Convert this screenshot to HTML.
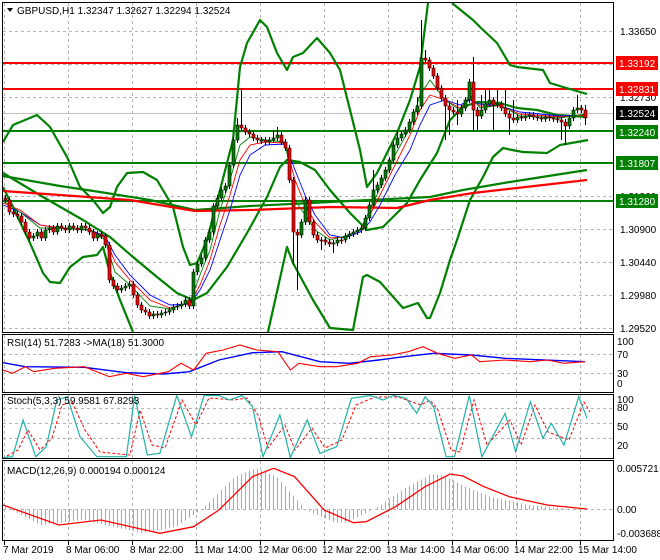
<!DOCTYPE html>
<html><head><meta charset="utf-8"><style>
html,body{margin:0;padding:0;background:#fff;width:660px;height:560px;overflow:hidden}
svg{display:block;font-family:"Liberation Sans",Tahoma,sans-serif;font-size:10px}
</style></head><body>
<svg width="660" height="560" viewBox="0 0 660 560" xmlns="http://www.w3.org/2000/svg">
<defs>
<pattern id="hp" x="0" y="0" width="4" height="10" patternUnits="userSpaceOnUse"><rect x="1" y="0" width="1" height="10" fill="#a8a8a8"/></pattern>
</defs>
<rect width="660" height="560" fill="#fff"/>
<!-- grid -->
<path fill="none" stroke="#b4b4b4" stroke-dasharray="3,3" d="M4.5,3V332M68.5,3V332M132.5,3V332M196.5,3V332M260.5,3V332M324.5,3V332M388.5,3V332M452.5,3V332M516.5,3V332M580.5,3V332
M4.5,335V392M68.5,335V392M132.5,335V392M196.5,335V392M260.5,335V392M324.5,335V392M388.5,335V392M452.5,335V392M516.5,335V392M580.5,335V392
M4.5,395V458M68.5,395V458M132.5,395V458M196.5,395V458M260.5,395V458M324.5,395V458M388.5,395V458M452.5,395V458M516.5,395V458M580.5,395V458
M4.5,461V540M68.5,461V540M132.5,461V540M196.5,461V540M260.5,461V540M324.5,461V540M388.5,461V540M452.5,461V540M516.5,461V540M580.5,461V540
M3,31.5H613M3,64.5H613M3,97.5H613M3,130.5H613M3,163.5H613M3,196.5H613M3,229.5H613M3,262.5H613M3,295.5H613M3,328.5H613
M3,354.5H613M3,373.5H613M3,408.5H613M3,423.5H613M3,438.5H613M3,509.5H613"/>
<!-- levels -->
<line x1="3" y1="113.5" x2="613" y2="113.5" stroke="#c0c0c0"/>
<g stroke-width="2">
<line x1="3" y1="63" x2="613" y2="63" stroke="#f00"/>
<line x1="3" y1="89" x2="613" y2="89" stroke="#f00"/>
<line x1="3" y1="131" x2="613" y2="131" stroke="#008000"/>
<line x1="3" y1="163" x2="613" y2="163" stroke="#008000"/>
<line x1="3" y1="201" x2="613" y2="201" stroke="#008000"/>
</g>
<!-- bands -->
<g fill="none" stroke-width="2.2" stroke-linejoin="round">
<polyline stroke="#008000" points="3,142 13,125 37,115 50,127 67,157 80,187 93,200 103,213 110,207 117,187 127,173 143,172 157,180 173,207 183,247 190,265 197,263 207,240 220,190 233,140 240,67 247,43 260,20 267,27 277,53 287,70 293,57 303,53 317,38 330,53 340,70 360,150 367,187 377,173 397,133 410,100 420,67 428,3"/>
<polyline stroke="#008000" points="452,3 473,20 480,27 497,43 510,65 517,67 543,70 550,83 563,87 587,94"/>
<polyline stroke="#008000" points="3,187 13,207 30,243 43,273 50,282 60,283 70,267 83,257 97,255 103,247 110,273 120,300 133,332"/>
<polyline stroke="#008000" points="268,332 287,247 293,263 313,300 330,328 353,330 363,277 367,275 380,282 403,308 418,303 427,318 430,318 440,293 450,260 457,240 470,200 483,177 493,157 503,148 512,150 523,152 547,153 560,145 577,142 588,140"/>
<polyline stroke="#008000" points="3,173 43,197 83,220 110,237 133,257 157,277 177,293 193,300 207,293 227,267 247,233 267,197 280,167 287,160 300,162 315,170 330,190 350,213 367,230 383,227 407,203 420,180 437,153 450,120 463,107 477,102 500,103 517,108 537,110 557,115 587,117"/>
<polyline stroke="#008000" points="3,176 60,186 100,192 150,200 195,210 250,206 330,202 430,197 463,190 510,182 587,170"/>
<polyline stroke="#f00" points="3,191 60,195 130,200 195,211 250,210 330,207 397,208 430,200 473,193 517,188 587,180"/>
</g>
<!-- small MAs -->
<g fill="none" stroke-width="0.9">
<polyline stroke="#00f" points="3,205 20,212 40,225 60,228 90,230 105,236 115,255 130,275 150,295 170,305 190,304 200,290 210,270 220,240 230,210 240,175 250,155 265,145 285,144 295,170 305,195 315,215 330,235 345,238 360,232 370,222 380,205 395,175 410,150 420,125 430,105 445,100 460,105 470,100 480,104 500,106 520,112 560,116 585,115"/>
<polyline stroke="#f00" points="3,203 20,210 40,225 60,228 90,230 105,238 115,262 130,280 150,300 170,308 190,303 200,285 210,260 220,225 230,195 240,160 250,145 265,142 285,143 295,180 305,205 315,222 330,238 345,237 360,230 370,215 380,195 395,165 410,135 420,110 430,95 445,100 460,108 470,98 480,106 500,106 520,114 560,117 585,115"/>
<polyline stroke="#008000" points="3,201 20,212 40,228 60,228 90,230 105,240 115,272 130,285 150,306 170,309 190,302 200,275 210,250 220,210 230,180 240,145 250,137 265,140 285,142 295,200 305,215 315,230 330,240 345,236 360,230 370,210 380,188 395,155 410,128 420,95 430,80 445,100 460,110 470,95 480,108 500,105 520,116 560,118 585,114"/>
</g>
<!-- wicks -->
<path fill="none" stroke="#000" stroke-width="1" d="M5.5,195V203M9.5,197V215M13.5,209V217M17.5,211V219M21.5,213V225M25.5,219V235M29.5,229V241M33.5,233V241M37.5,229V239M41.5,229V241M45.5,227V241M49.5,225V233M53.5,225V235M57.5,223V235M61.5,223V231M65.5,225V233M69.5,223V233M73.5,223V231M77.5,225V233M81.5,223V233M85.5,223V231M89.5,225V235M93.5,229V241M97.5,231V241M101.5,231V239M105.5,233V248M109.5,242V283M113.5,277V289M117.5,283V293M121.5,285V293M125.5,283V291M129.5,281V289M133.5,281V298M137.5,292V308M141.5,302V313M145.5,307V315M149.5,309V319M153.5,311V319M157.5,311V318M161.5,310V318M165.5,309V316M169.5,307V315M173.5,304V313M177.5,303V310M181.5,301V309M185.5,296V307M189.5,297V309M193.5,269V309M197.5,261V275M201.5,255V267M205.5,237V261M209.5,229V243M213.5,203V235M217.5,195V209M221.5,187V201M225.5,183V193M229.5,162V189M233.5,137V168M237.5,118V143M241.5,88V131M245.5,125V135M249.5,129V137M253.5,131V141M257.5,135V143M261.5,137V144M265.5,137V145M269.5,137V145M273.5,130V143M277.5,127V141M281.5,132V145M285.5,139V151M289.5,145V183M293.5,177V265M297.5,229V290M301.5,219V238M305.5,197V225M309.5,197V225M313.5,219V238M317.5,232V243M321.5,237V250M325.5,237V245M329.5,239V247M333.5,240V253M337.5,237V246M341.5,237V244M345.5,233V243M349.5,231V239M353.5,229V237M357.5,227V235M361.5,225V233M365.5,215V231M369.5,202V221M373.5,170V208M377.5,182V193M381.5,175V188M385.5,167V181M389.5,157V173M393.5,142V163M397.5,130V148M401.5,131V141M405.5,127V137M409.5,119V133M413.5,109V125M417.5,97V115M421.5,20V109M425.5,50V63M429.5,57V71M433.5,65V79M437.5,73V91M441.5,85V101M445.5,95V140M449.5,103V135M453.5,107V115M457.5,100V125M461.5,105V117M465.5,97V111M469.5,79V103M473.5,57V132M477.5,107V130M481.5,95V119M485.5,90V113M489.5,88V107M493.5,97V130M497.5,90V108M501.5,101V111M505.5,90V117M509.5,111V135M513.5,100V123M517.5,114V123M521.5,114V121M525.5,113V121M529.5,112V119M533.5,112V120M537.5,114V121M541.5,115V122M545.5,114V122M549.5,114V121M553.5,115V122M557.5,116V123M561.5,117V140M565.5,119V145M569.5,115V129M573.5,107V121M577.5,95V113M581.5,105V113M585.5,105V125"/>
<!-- red bodies -->
<path fill="#f00" stroke="#000" stroke-width="0.6" d="M4,198h3v2h-3zM8,200h3v12h-3zM12,212h3v2h-3zM16,214h3v2h-3zM20,216h3v6h-3zM24,222h3v10h-3zM28,232h3v6h-3zM40,232h3v6h-3zM52,228h3v4h-3zM60,226h3v2h-3zM64,228h3v2h-3zM72,226h3v2h-3zM76,228h3v2h-3zM84,226h3v2h-3zM88,228h3v4h-3zM92,232h3v6h-3zM100,234h3v2h-3zM104,236h3v9h-3zM108,245h3v35h-3zM112,280h3v6h-3zM116,286h3v4h-3zM132,284h3v11h-3zM136,295h3v10h-3zM140,305h3v5h-3zM144,310h3v2h-3zM148,312h3v4h-3zM156,314h3v1h-3zM188,300h3v6h-3zM240,125h3v3h-3zM244,128h3v4h-3zM248,132h3v2h-3zM252,134h3v4h-3zM256,138h3v2h-3zM264,140h3v2h-3zM280,135h3v7h-3zM284,142h3v6h-3zM288,148h3v32h-3zM292,180h3v52h-3zM296,232h3v3h-3zM308,200h3v22h-3zM312,222h3v13h-3zM316,235h3v5h-3zM320,240h3v1h-3zM324,240h3v2h-3zM328,242h3v2h-3zM340,240h3v1h-3zM424,58h3v2h-3zM428,60h3v8h-3zM432,68h3v8h-3zM436,76h3v12h-3zM440,88h3v10h-3zM444,98h3v8h-3zM448,106h3v4h-3zM452,110h3v2h-3zM456,112h3v2h-3zM472,82h3v28h-3zM476,110h3v6h-3zM492,100h3v5h-3zM500,104h3v4h-3zM504,108h3v6h-3zM508,114h3v4h-3zM512,118h3v2h-3zM520,117h3v1h-3zM532,115h3v2h-3zM536,117h3v1h-3zM540,118h3v1h-3zM548,117h3v1h-3zM552,118h3v1h-3zM556,119h3v1h-3zM560,120h3v2h-3zM564,122h3v4h-3zM580,108h3v2h-3zM584,110h3v8h-3z"/>
<!-- green bodies -->
<path fill="#008000" stroke="#000" stroke-width="0.6" d="M32,236h3v2h-3zM36,232h3v4h-3zM44,230h3v8h-3zM48,228h3v2h-3zM56,226h3v6h-3zM68,226h3v4h-3zM80,226h3v4h-3zM96,234h3v4h-3zM120,288h3v2h-3zM124,286h3v2h-3zM128,284h3v2h-3zM152,314h3v2h-3zM160,313h3v2h-3zM164,312h3v1h-3zM168,310h3v2h-3zM172,307h3v3h-3zM176,306h3v1h-3zM180,304h3v2h-3zM184,300h3v4h-3zM192,272h3v34h-3zM196,264h3v8h-3zM200,258h3v6h-3zM204,240h3v18h-3zM208,232h3v8h-3zM212,206h3v26h-3zM216,198h3v8h-3zM220,190h3v8h-3zM224,186h3v4h-3zM228,165h3v21h-3zM232,140h3v25h-3zM236,125h3v15h-3zM260,140h3v1h-3zM268,140h3v2h-3zM272,138h3v2h-3zM276,135h3v3h-3zM300,222h3v13h-3zM304,200h3v22h-3zM332,243h3v1h-3zM336,240h3v3h-3zM344,236h3v4h-3zM348,234h3v2h-3zM352,232h3v2h-3zM356,230h3v2h-3zM360,228h3v2h-3zM364,218h3v10h-3zM368,205h3v13h-3zM372,190h3v15h-3zM376,185h3v5h-3zM380,178h3v7h-3zM384,170h3v8h-3zM388,160h3v10h-3zM392,145h3v15h-3zM396,138h3v7h-3zM400,134h3v4h-3zM404,130h3v4h-3zM408,122h3v8h-3zM412,112h3v10h-3zM416,106h3v6h-3zM420,58h3v48h-3zM460,108h3v6h-3zM464,100h3v8h-3zM468,82h3v18h-3zM480,110h3v6h-3zM484,104h3v6h-3zM488,100h3v4h-3zM496,104h3v1h-3zM516,117h3v3h-3zM524,116h3v2h-3zM528,115h3v1h-3zM544,117h3v2h-3zM568,118h3v8h-3zM572,110h3v8h-3zM576,108h3v2h-3z"/>
<!-- RSI -->
<polyline fill="none" stroke="#00f" stroke-width="1.4" points="3,362.7 25.3,366.7 84.2,367.3 126.3,372.7 164.1,374 189.4,371.7 218.9,360 252.5,352.7 282,351.7 319.9,361.7 349.3,363.3 378.8,360 404,356.7 433.5,353.3 471.4,355 505.1,358.3 585,361.7"/>
<polyline fill="none" stroke="#f00" stroke-width="1.1" points="3,370 12.6,373.3 25.3,366.7 33.7,371.7 54.7,368.3 84.2,366.7 109.4,376.7 126.3,373.3 143.1,376.7 168.4,371.7 181,363.3 193.6,370 206.2,353.3 223.1,350 239.9,345 256.7,350 277.8,351.7 290.4,370 298.8,363.3 319.9,366.7 336.7,366.7 357.7,363.3 370.4,356.7 391.4,355 408.2,351.7 423,346.7 437.7,353.3 454.5,358.3 471.4,355 479.8,361.7 505.1,360 530.3,361.7 547.1,360 564,363.3 585,361.7"/>
<!-- Stoch -->
<polyline fill="none" stroke="#f00" stroke-width="1" stroke-dasharray="3,2" points="7,456 18,450 28,430 40,450 52,438 62,405 72,402 85,430 100,452 130,455 140,410 152,445 165,448 182,400 196,425 209,398 234,400 247,398 258,415 268,448 285,425 295,450 312,428 325,448 342,440 356,405 375,397 398,397 421,405 430,400 438,410 451,450 460,452 474,400 487,445 510,420 521,445 535,405 548,432 569,440 584,402 590,412"/>
<polyline fill="none" stroke="#20b2aa" stroke-width="1.2" points="3,457.5 12.6,456.7 23.1,420 35.8,456.7 46.3,446.7 56.8,400 67.3,396.7 80,436.7 96.8,456.7 113.6,456.7 126.3,456.7 134.7,395.5 147.3,455 159.9,453.3 176.8,395.5 191.5,436.7 204.1,395.5 218.9,395.5 229.4,400 242,395.5 252.5,406.7 263,456.7 279.9,415 290.4,457.5 307.2,420 319.9,453.3 336.7,446.7 351.4,398.3 370.4,395.5 383,400 393.5,395.5 406.1,398.3 416.7,413.3 425.1,396.7 433.5,406.7 446.1,456.7 454.5,456.7 469.3,395.5 481.9,456.7 505.1,413.3 515.6,451.7 530.3,401.7 542.9,438.3 551.3,423.3 564,445 578.7,396.7 587.1,418.3"/>
<!-- MACD -->
<polygon fill="url(#hp)" points="3,505.5 41,525 83,520 142,533 176,527 201,510 235,477 256,468 277,477 306,510 336,523 348,522 378,507 407,487 432,474 445,476 466,487 491,497 529,505 569,509 587,509 587,509.5 3,509.5"/>
<polyline fill="none" stroke="#f00" stroke-width="1.3" points="3,505 58.9,525 101,520 159.9,533.3 193.6,526.7 218.9,510 252.5,476.7 273.6,468.3 294.6,476.7 324.1,510 353.5,522.7 366.2,521.7 395.6,506.7 425.1,486.7 450.3,474 463,476 484,486.7 509.3,496.7 547.1,505 587.1,509"/>
<!-- frames -->
<g fill="none" stroke="#000" stroke-width="1">
<rect x="2.5" y="2.5" width="611" height="330"/>
<rect x="2.5" y="334.5" width="611" height="58"/>
<rect x="2.5" y="394.5" width="611" height="64"/>
<rect x="2.5" y="460.5" width="611" height="80"/>
</g>
<!-- right axis -->
<g fill="#000">
<text x="620" y="35">1.33650</text>
<text x="620" y="101">1.32730</text>
<text x="620" y="200">1.31360</text>
<text x="620" y="233">1.30900</text>
<text x="620" y="266">1.30440</text>
<text x="620" y="299">1.29980</text>
<text x="620" y="332">1.29520</text>
</g>
<g>
<rect x="616" y="56" width="42" height="14" fill="#f00"/><text x="619" y="67" fill="#fff">1.33192</text>
<rect x="616" y="82" width="42" height="14" fill="#f00"/><text x="619" y="93" fill="#fff">1.32831</text>
<rect x="616" y="106" width="42" height="14" fill="#000"/><text x="619" y="117" fill="#fff">1.32524</text>
<rect x="616" y="125" width="42" height="14" fill="#008000"/><text x="619" y="136" fill="#fff">1.32240</text>
<rect x="616" y="156" width="42" height="14" fill="#008000"/><text x="619" y="167" fill="#fff">1.31807</text>
<rect x="616" y="194" width="42" height="14" fill="#008000"/><text x="619" y="205" fill="#fff">1.31280</text>
</g>
<g fill="#000">
<text x="617" y="345">100</text><text x="617" y="358">70</text><text x="617" y="377">30</text><text x="617" y="387">0</text>
<text x="617" y="403">100</text><text x="617" y="411">80</text><text x="617" y="430">50</text><text x="617" y="449">20</text>
<text x="617" y="472">0.005721</text><text x="617" y="513">0.00</text><text x="617" y="537">-0.003688</text>
</g>
<g fill="#000">
<text x="3" y="553">7 Mar 2019</text>
<text x="66" y="553">8 Mar 06:00</text>
<text x="130" y="553">8 Mar 22:00</text>
<text x="194" y="553">11 Mar 14:00</text>
<text x="258" y="553">12 Mar 06:00</text>
<text x="322" y="553">12 Mar 22:00</text>
<text x="386" y="553">13 Mar 14:00</text>
<text x="450" y="553">14 Mar 06:00</text>
<text x="514" y="553">14 Mar 22:00</text>
<text x="578" y="553">15 Mar 14:00</text>
</g>
<path stroke="#000" d="M4.5,541V545M68.5,541V545M132.5,541V545M196.5,541V545M260.5,541V545M324.5,541V545M388.5,541V545M452.5,541V545M516.5,541V545M580.5,541V545"/>
<polygon points="7,8 13,8 10,12" fill="#000"/>
<text x="17" y="14" fill="#000">GBPUSD,H1  1.32347 1.32627 1.32294 1.32524</text>
<text x="7" y="346" fill="#000">RSI(14) 51.7283  -&gt;MA(18) 51.3000</text>
<text x="7" y="404" fill="#000">Stoch(5,3,3) 59.9581 67.8293</text>
<text x="7" y="474" fill="#000">MACD(12,26,9) 0.000194 0.000124</text>
</svg>
</body></html>
